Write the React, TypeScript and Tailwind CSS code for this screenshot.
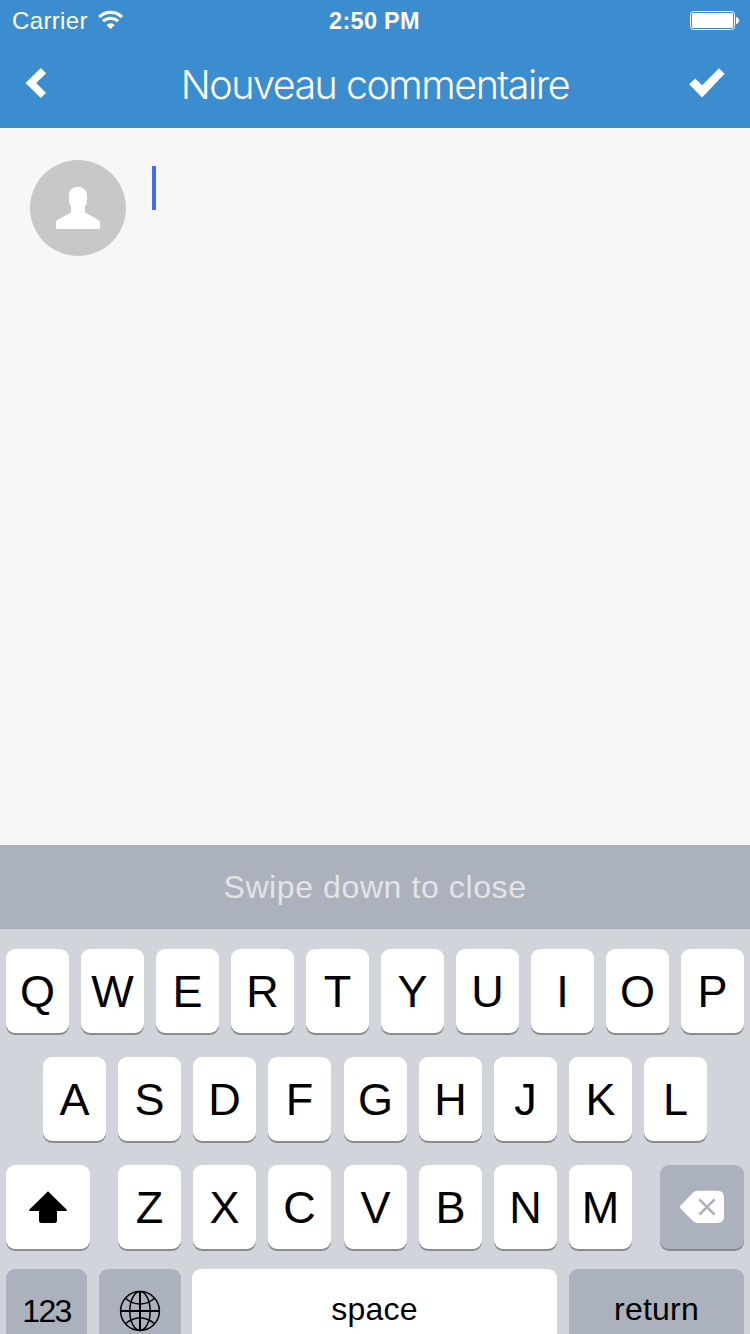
import type { ReactNode } from "react";

const LIBERATION = "font-['Liberation_Sans',Arial,sans-serif]";

function StatusBar() {
  return (
    <div className="flex h-10 items-center text-white">
      <div className="flex w-[250px] items-center">
        <span className="ml-3 w-[86px] pt-px text-[24px] leading-10 tracking-[0.35px]">Carrier</span>
        <svg className="h-5 w-[26px]" viewBox="98 10 26 20" fill="none">
          <path d="M99.2 17.2A15.8 15.8 0 0 1 122 17.2" stroke="#fff" strokeWidth="3.2" />
          <path d="M103.2 21.3A10.4 10.4 0 0 1 118 21.3" stroke="#fff" strokeWidth="3" />
          <path d="M106.4 25A6.2 6.2 0 0 1 114.8 25L110.6 29Z" fill="#fff" />
        </svg>
      </div>
      <div className="w-[249px] pt-px text-center text-[23.5px] font-bold leading-10 tracking-[0.3px]">2:50 PM</div>
      <div className="flex w-[251px] justify-end pr-[10px]">
        <svg className="h-5 w-[50px]" viewBox="690 10 50 20">
          <rect x="690.5" y="11.5" width="44" height="18" rx="3" fill="none" stroke="#fff" />
          <rect x="692" y="13" width="41" height="15" rx="1.6" fill="#fff" />
          <path d="M736 17C738.2 17.4 739 18.7 739 20.5C739 22.3 738.2 23.6 736 24Z" fill="#fff" />
        </svg>
      </div>
    </div>
  );
}

function NavBar() {
  return (
    <div className="flex h-[88px] items-center justify-between px-6 text-white">
      <button className="h-8 w-9">
        <svg className="h-8 w-9" viewBox="24 69 36 32" fill="#fff">
          <path d="M25.6 83L40.8 68L46.1 73.2L36.2 83L46.1 92.9L40.8 98.1Z" transform="translate(0 1)" />
        </svg>
      </button>
      <h1 className="whitespace-nowrap pt-[3px] font-['Inter',sans-serif] text-[39.5px] font-light leading-[85px] tracking-[-1.52px]">
        Nouveau commentaire
      </h1>
      <button className="h-8 w-9">
        <svg className="h-8 w-9 overflow-visible" viewBox="690 68 36 32" fill="#fff">
          <path d="M689.2 84.2L695.2 78.5L702.1 85.3L719 68.3L724.6 73.8L702.1 97.4Z" />
        </svg>
      </button>
    </div>
  );
}

function Key({ children, className = "" }: { children: ReactNode; className?: string }) {
  return (
    <div
      className={`flex h-[84px] shrink-0 items-center justify-center rounded-[9px] shadow-[0_2px_0_#888b8e] ${className}`}
    >
      {children}
    </div>
  );
}

function LetterKeys({ letters }: { letters: string }) {
  return (
    <>
      {letters.split("").map((letter) => (
        <Key key={letter} className="w-[63px] bg-white text-[45px] leading-none text-black">
          {letter}
        </Key>
      ))}
    </>
  );
}

function Keyboard() {
  return (
    <div className="flex h-[405px] flex-col overflow-hidden bg-[#d1d4db] pt-5 text-black">
      <div className="flex h-[108px] shrink-0 gap-3 px-1.5">
        <LetterKeys letters="QWERTYUIOP" />
      </div>
      <div className="flex h-[108px] shrink-0 gap-[13px] pl-[43px]">
        <div className="flex gap-3">
          <LetterKeys letters="ASDF" />
        </div>
        <div className="flex gap-3">
          <LetterKeys letters="GHJKL" />
        </div>
      </div>
      <div className="flex h-[104px] shrink-0 justify-between px-1.5">
        <Key className="w-[84px] bg-white">
          <svg className="h-9 w-10" viewBox="28 1189 40 36">
            <path d="M48 1191.3L66.8 1209.7Q67.2 1211 66 1211H57V1220.5Q57 1223 54.5 1223H41.5Q39 1223 39 1220.5V1211H30Q28.8 1211 29.2 1209.7Z" />
          </svg>
        </Key>
        <div className="flex gap-[13px]">
          <div className="flex gap-3">
            <LetterKeys letters="ZXC" />
          </div>
          <div className="flex gap-3">
            <LetterKeys letters="VBNM" />
          </div>
        </div>
        <Key className="w-[84px] bg-[#abb1bd]">
          <svg className="h-9 w-[46px]" viewBox="679 1189 46 36">
            <path
              d="M680.6 1205.6L693.2 1192.6Q695 1190.8 697.6 1190.8H717.5Q724 1190.8 724 1197.3V1216.5Q724 1223 717.5 1223H697.6Q695 1223 693.2 1221.2L680.6 1208.4Q679.4 1207 680.6 1205.6Z"
              fill="#fff"
            />
            <path d="M699.4 1199.4L714.6 1214.6M714.6 1199.4L699.4 1214.6" stroke="#abb1bd" strokeWidth="2.7" />
          </svg>
        </Key>
      </div>
      <div className="flex shrink-0 px-1.5 text-[32px]">
        <Key className="mr-3 w-[81px] bg-[#abb1bd]">
          <span className="tracking-[-1.6px]">123</span>
        </Key>
        <Key className="mr-[11px] w-[82px] bg-[#abb1bd]">
          <svg className="h-[42px] w-[42px]" viewBox="-21 -21 42 42" fill="none" stroke="#000" strokeWidth="1.5">
            <circle r="19.4" />
            <ellipse rx="10.2" ry="19.4" />
            <path d="M0-19.4V19.4M-19.4 0H19.4" strokeWidth="2" />
            <path d="M-14.6-12.8Q-8-7 0-7T14.6-12.8M-14.6 12.8Q-8 7 0 7T14.6 12.8" />
          </svg>
        </Key>
        <Key className="mr-3 w-[365px] bg-white">
          <span className="-mt-1 tracking-[0.2px]">space</span>
        </Key>
        <Key className="w-[175px] bg-[#abb1bd]">
          <span className="-mt-1 tracking-[0.2px]">return</span>
        </Key>
      </div>
    </div>
  );
}

export default function App() {
  return (
    <div className={`flex h-[1334px] w-[750px] flex-col overflow-hidden bg-[#f7f7f7] ${LIBERATION}`}>
      <header className="h-32 bg-[#3c8dcf]">
        <StatusBar />
        <NavBar />
      </header>
      <main className="flex h-[717px] items-start pl-[30px] pt-8">
        <svg className="h-24 w-24" viewBox="30 160 96 96">
          <circle cx="78" cy="208" r="48" fill="#c8c8c8" />
          <path
            d="M78 186.8C83.6 186.8 87 190.5 87 195.5V202Q87 204.5 85 205.6V212.6L98.3 219.8Q100 220.8 100 222.8V228Q100 229 99 229H57Q56 229 56 228V222.8Q56 220.8 57.7 219.8L71 212.6V205.6Q69 204.5 69 202V195.5C69 190.5 72.4 186.8 78 186.8Z"
            fill="#fff"
          />
        </svg>
        <div className="ml-[26px] mt-1.5 h-11 w-1 bg-[#426bf2]" />
      </main>
      <div className="flex h-[84px] items-center justify-center bg-[#abb1bd] text-[32px] tracking-[0.6px] text-[#e3e4e4]">
        Swipe down to close
      </div>
      <Keyboard />
    </div>
  );
}
